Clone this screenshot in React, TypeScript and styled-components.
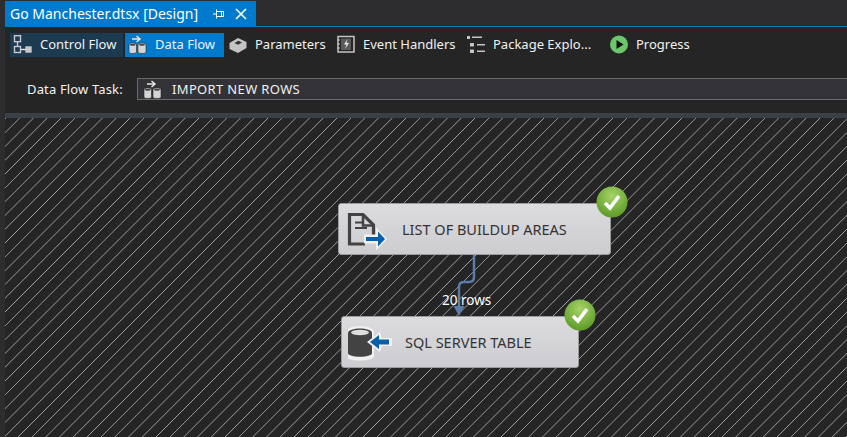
import React from 'react';
import styled, { createGlobalStyle } from 'styled-components';

const GlobalStyle = createGlobalStyle`
  html, body {
    margin: 0;
    padding: 0;
    width: 847px;
    height: 437px;
    overflow: hidden;
    background: #2d2d30;
  }
  * {
    box-sizing: border-box;
  }
`;

const Page = styled.div`
  width: 847px;
  height: 437px;
  padding-left: 5px;
  display: flex;
  flex-direction: column;
  background: #2d2d30;
  font-family: 'Noto Sans', 'Open Sans', sans-serif;
  font-size: 13px;
  color: #f1f1f1;
  overflow: hidden;
`;

const TabStrip = styled.div`
  height: 27px;
  padding-top: 1px;
  display: flex;
  flex: none;
  border-bottom: 1px solid #007acc;
`;

const DocTab = styled.div`
  width: 251px;
  height: 25px;
  padding: 0 4px 0 5px;
  display: flex;
  align-items: center;
  background: #007acc;
  color: #ffffff;
  font-size: 14px;
`;

const DocTitle = styled.span`
  flex: 1;
  white-space: nowrap;
`;

const TabAction = styled.span`
  width: 22px;
  display: flex;
  justify-content: center;
  align-items: center;
`;

const Body = styled.div`
  flex: none;
  height: 86px;
  background: #252526;
  display: flex;
  flex-direction: column;
`;

const Toolbar = styled.div`
  margin-top: 6px;
  padding-left: 5px;
  height: 24px;
  display: flex;
  gap: 2px;
`;

const ToolButton = styled.div<{ $width: number; $state?: 'active' | 'hover' }>`
  width: ${(p) => p.$width}px;
  height: 24px;
  padding: 0 0 2px 3px;
  display: flex;
  align-items: center;
  gap: 8px;
  white-space: nowrap;
  color: #f1f1f1;
  background: ${(p) =>
    p.$state === 'active' ? '#007acc' : p.$state === 'hover' ? '#1c3a50' : 'transparent'};
`;

const TaskRow = styled.div`
  margin-top: 21px;
  padding-left: 22px;
  height: 22px;
  display: flex;
  align-items: center;
`;

const TaskLabel = styled.span`
  width: 110px;
  flex: none;
  white-space: nowrap;
  letter-spacing: 0.15px;
`;

const TaskCombo = styled.div`
  flex: 1;
  height: 22px;
  padding-left: 5px;
  display: flex;
  align-items: center;
  gap: 10px;
  background: #333337;
  border: 1px solid #6a6a6a;
  border-right: none;
  letter-spacing: 0.35px;
`;

const Divider = styled.div`
  flex: none;
  height: 5px;
  background: #3a4045;
`;

const Canvas = styled.div`
  position: relative;
  flex: 1;
  background-color: #252526;
  background-image: repeating-linear-gradient(
    135deg,
    #252526 0,
    #a4a4a4 0.6px,
    #252526 1.3px,
    #252526 9.758px
  );
`;

const Node = styled.div<{ $left: number; $top: number; $width: number }>`
  position: absolute;
  left: ${(p) => p.$left}px;
  top: ${(p) => p.$top}px;
  width: ${(p) => p.$width}px;
  height: 52px;
  padding-left: 6px;
  display: flex;
  align-items: center;
  border-radius: 3px;
  background: linear-gradient(#dcdcdf, #cdcdd1);
  border: 1px solid #9c9ca0;
  color: #333333;
  font-size: 14.5px;
  white-space: nowrap;
`;

const NodeLabel = styled.span`
  margin-left: 13px;
`;

const Badge = styled.svg`
  position: absolute;
  right: -18px;
  top: -18px;
`;

const Connector = styled.svg`
  position: absolute;
  left: 450px;
  top: 136px;
  overflow: visible;
`;

const RowCount = styled.span`
  position: absolute;
  left: 437px;
  top: 173px;
  color: #ffffff;
  font-size: 13.5px;
  white-space: nowrap;
`;

const ControlFlowIcon = () => (
  <svg width="19" height="19" viewBox="0 0 19 19" fill="none" stroke="#c8c8c8" strokeWidth="1.4">
    <rect x="1.5" y="0.7" width="6" height="6" />
    <path d="M4.5 7v4" />
    <rect x="1.5" y="11.5" width="6" height="6" />
    <path d="M8 14.5h5" stroke="#e8e8e8" />
    <rect x="13" y="12" width="5" height="5" fill="#c8c8c8" />
  </svg>
);

const DataFlowIcon = ({ size = 19 }: { size?: number }) => (
  <svg width={size} height={size} viewBox="0 0 19 19">
    <path d="M4 4h7M8.500 1l3.500 3-3.500 3" fill="none" stroke="#e6e6e6" strokeWidth="1.5" />
    <path d="M1 9.500c0-2 7.500-2 7.500 0v7.500c0 2-7.500 2-7.500 0z" fill="#d4d4d4" stroke="#252526" strokeWidth="0.6" />
    <path d="M10 9.500c0-2 8-2 8 0v7.500c0 2-8 2-8 0z" fill="#d4d4d4" stroke="#252526" strokeWidth="0.6" />
    <ellipse cx="4.750" cy="9.800" rx="3" ry="1" fill="#404040" />
    <ellipse cx="14" cy="9.800" rx="3" ry="1" fill="#404040" />
  </svg>
);

const ParametersIcon = () => (
  <svg width="18" height="19" viewBox="0 0 18 19">
    <path d="M0.500 8l8.500-5 8.500 4v6l-8.500 5-8.500-4z" fill="#c4c4c4" />
    <path d="M5.500 8l4-2.200 3.500 1.700-4 2.200z" fill="#333333" />
  </svg>
);

const EventIcon = () => (
  <svg width="18" height="19" viewBox="0 0 18 19" fill="none">
    <rect x="1" y="1.500" width="16" height="15.500" stroke="#c4c4c4" strokeWidth="1.500" />
    <path d="M0 5h3M0 9h3M0 13h3" stroke="#c4c4c4" strokeWidth="1.200" />
    <rect x="4" y="3.500" width="10" height="11.500" fill="#5a5a5a" />
    <path d="M10.500 4L7 9.500h2.500L8 14l4-6H9.500z" fill="#ededed" />
  </svg>
);

const ExplorerIcon = () => (
  <svg width="18" height="19" viewBox="0 0 18 19" fill="#c4c4c4">
    <rect x="0" y="1" width="3" height="3" />
    <rect x="5" y="1.500" width="10" height="1.500" />
    <rect x="3" y="8" width="4" height="3.500" />
    <rect x="10" y="9" width="8" height="1.500" />
    <rect x="3" y="14.500" width="4" height="3.500" />
    <rect x="10" y="15.500" width="8" height="1.500" />
  </svg>
);

const ProgressIcon = () => (
  <svg width="18" height="19" viewBox="0 0 18 19">
    <circle cx="9" cy="9.500" r="9" fill="#6cc66c" />
    <path d="M6.500 5l7 4.500-7 4.500z" fill="#111111" />
  </svg>
);

const PinIcon = () => (
  <svg width="12" height="12" viewBox="0 0 12 12" fill="none" stroke="#ffffff">
    <path d="M0 6h3M3.500 1.500v9M3.500 3.500h7v5h-7M8.500 3.500v5" />
  </svg>
);

const CloseIcon = () => (
  <svg width="12" height="12" viewBox="0 0 12 12" stroke="#ffffff" strokeWidth="1.600">
    <path d="M1 1l10 10M11 1L1 11" />
  </svg>
);

const SuccessBadge = () => (
  <Badge width="32" height="32" viewBox="0 0 32 32">
    <defs>
      <radialGradient id="green" cx="50%" cy="30%" r="70%">
        <stop offset="0" stopColor="#a6d368" />
        <stop offset="1" stopColor="#5c9a26" />
      </radialGradient>
    </defs>
    <circle cx="16" cy="16" r="15.500" fill="url(#green)" />
    <path d="M9 17l5 5 9-12" fill="none" stroke="#ffffff" strokeWidth="3.600" />
  </Badge>
);

const FileSourceIcon = () => (
  <svg width="44" height="44" viewBox="0 0 44 44">
    <path d="M20 37H4.500V7.500H18L28.500 18v10" fill="none" stroke="#434343" strokeWidth="3.200" />
    <path d="M18 7v11.500h11" fill="none" stroke="#434343" strokeWidth="2.600" />
    <path d="M10 15.500h7M10 21h12" stroke="#434343" strokeWidth="2.200" />
    <path d="M19 27.500h12v-7l11 11.500-11 11.500v-7H19z" fill="#f0f0f0" />
    <path d="M21 30h12v-5.500l7 7.500-7 7.500V34H21z" fill="#0a5fa8" />
  </svg>
);

const TableDestIcon = () => (
  <svg width="44" height="44" viewBox="0 0 44 44">
    <path d="M-2 12c0-8 28-8 28 0v24c0 6-28 6-28 0z" fill="#f0f0f0" />
    <path d="M0 13c0-6 24-6 24 0v20c0 5-24 5-24 0z" fill="#434343" />
    <ellipse cx="12" cy="12.500" rx="9" ry="2.800" fill="#dedede" />
    <path d="M44 18H34l-2-6-13 10 13 10 2-6h10z" fill="#f0f0f0" />
    <path d="M41 19.500H31V15l-9 7 9 7v-4.500h10z" fill="#0a5fa8" />
  </svg>
);

const App = () => {
  return (
    <Page>
      <GlobalStyle />
      <TabStrip>
        <DocTab>
          <DocTitle>Go Manchester.dtsx [Design]</DocTitle>
          <TabAction>
            <PinIcon />
          </TabAction>
          <TabAction>
            <CloseIcon />
          </TabAction>
        </DocTab>
      </TabStrip>
      <Body>
        <Toolbar>
          <ToolButton $width={113} $state="hover">
            <ControlFlowIcon />
            Control Flow
          </ToolButton>
          <ToolButton $width={99} $state="active">
            <DataFlowIcon />
            Data Flow
          </ToolButton>
          <ToolButton $width={106}>
            <ParametersIcon />
            Parameters
          </ToolButton>
          <ToolButton $width={128}>
            <EventIcon />
            Event Handlers
          </ToolButton>
          <ToolButton $width={141}>
            <ExplorerIcon />
            Package Explo...
          </ToolButton>
          <ToolButton $width={90}>
            <ProgressIcon />
            Progress
          </ToolButton>
        </Toolbar>
        <TaskRow>
          <TaskLabel>Data Flow Task:</TaskLabel>
          <TaskCombo>
            <DataFlowIcon />
            IMPORT NEW ROWS
          </TaskCombo>
        </TaskRow>
      </Body>
      <Divider />
      <Canvas>
        <Connector width="32" height="64" viewBox="0 0 32 64">
          <path
            d="M19 0v23q0 5-5 5h-5q-5 0-5 5v20"
            fill="none"
            stroke="#5b7ba8"
            strokeWidth="2.500"
          />
          <path d="M-1.500 52h11l-5.500 10z" fill="#5b7ba8" />
        </Connector>
        <RowCount>20 rows</RowCount>
        <Node $left={333} $top={85} $width={273}>
          <FileSourceIcon />
          <NodeLabel>LIST OF BUILDUP AREAS</NodeLabel>
          <SuccessBadge />
        </Node>
        <Node $left={336} $top={198} $width={238}>
          <TableDestIcon />
          <NodeLabel>SQL SERVER TABLE</NodeLabel>
          <SuccessBadge />
        </Node>
      </Canvas>
    </Page>
  );
};

export default App;
